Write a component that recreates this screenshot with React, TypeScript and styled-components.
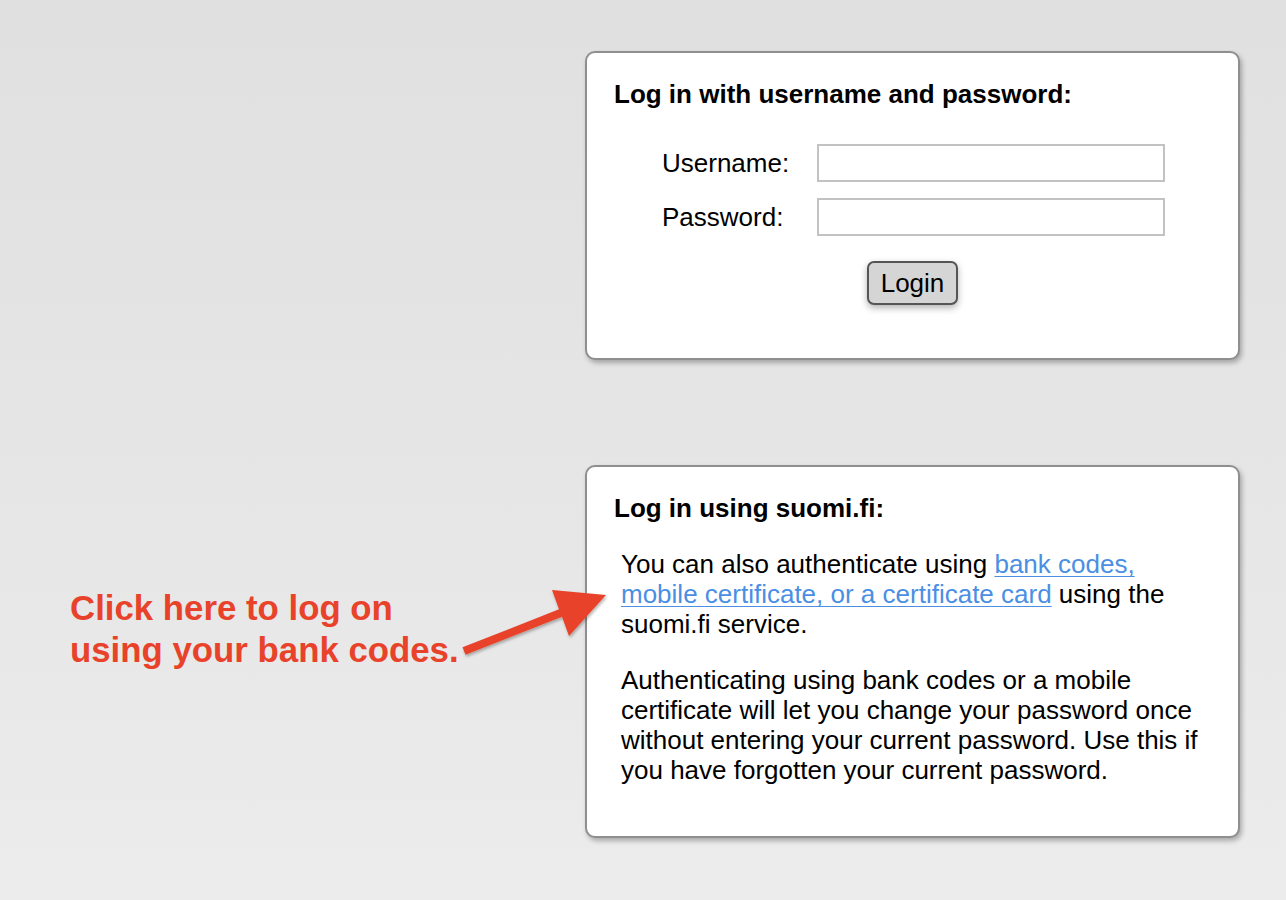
import React from "react";
import styled, { createGlobalStyle } from "styled-components";

const GlobalStyle = createGlobalStyle`
  html, body {
    margin: 0;
    padding: 0;
  }
  body {
    font-family: "Liberation Sans", Arial, Helvetica, sans-serif;
    color: #000;
    background: #e5e5e5;
  }
`;

const Page = styled.div`
  position: relative;
  box-sizing: border-box;
  min-height: 900px;
  width: 1286px;
  padding-top: 51px;
  background: linear-gradient(to bottom, #e0e0e0 0%, #e6e6e6 55%, #ececec 100%);
  display: grid;
  grid-template-columns: 585px 655px;
  grid-auto-rows: auto;
  row-gap: 105px;
  align-content: start;
`;

const Card = styled.section<{ $pb: number }>`
  grid-column: 2;
  box-sizing: border-box;
  background: #fff;
  border: 2px solid #8f8f8f;
  border-radius: 10px;
  box-shadow: 2px 3px 5px rgba(0, 0, 0, 0.28);
  padding: 26px 27px ${(p) => p.$pb}px 27px;
`;

const Title = styled.h2`
  margin: 0;
  font-size: 26px;
  line-height: 30px;
  font-weight: bold;
`;

const FormGrid = styled.div`
  display: grid;
  grid-template-columns: 155px 348px;
  row-gap: 16px;
  align-items: center;
  margin: 35px 0 0 48px;
`;

const Label = styled.label`
  font-size: 26px;
  line-height: 30px;
`;

const Input = styled.input`
  box-sizing: border-box;
  width: 348px;
  height: 38px;
  margin: 0;
  border: 2px solid #c2c2c2;
  border-radius: 0;
  background: #fff;
  font-family: inherit;
  font-size: 20px;
  outline: none;
`;

const ButtonRow = styled.div`
  display: flex;
  justify-content: center;
  margin-top: 25px;
`;

const Button = styled.button`
  box-sizing: border-box;
  width: 91px;
  height: 44px;
  padding: 0;
  background: #d5d5d5;
  border: 2px solid #555;
  border-radius: 7px;
  box-shadow: 0 3px 7px rgba(0, 0, 0, 0.3);
  font-family: "Liberation Sans", Arial, Helvetica, sans-serif;
  font-size: 26px;
  line-height: 30px;
  color: #000;
  cursor: pointer;
`;

const Para = styled.p`
  margin: 26px 7px 0 7px;
  font-size: 26px;
  line-height: 30px;
`;

const Link = styled.a`
  color: #4a8fe3;
  text-decoration: underline;
  text-decoration-thickness: 1px;
  text-underline-offset: 3px;
`;

const Annotation = styled.div`
  grid-column: 1;
  padding: 122px 0 0 70px;
  font-size: 34.8px;
  line-height: 42px;
  font-weight: bold;
  color: #e8432a;
`;

const ArrowLayer = styled.svg`
  position: absolute;
  left: 0;
  top: 0;
  width: 1286px;
  height: 900px;
  pointer-events: none;
  overflow: visible;
`;

export default function App() {
  return (
    <>
      <GlobalStyle />
      <Page>
        <Card $pb={53}>
          <Title>Log in with username and password:</Title>
          <FormGrid>
            <Label htmlFor="username">Username:</Label>
            <Input id="username" type="text" />
            <Label htmlFor="password">Password:</Label>
            <Input id="password" type="password" />
          </FormGrid>
          <ButtonRow>
            <Button type="button">Login</Button>
          </ButtonRow>
        </Card>
        <Annotation>
          Click here to log on
          <br />
          using your bank codes.
        </Annotation>
        <Card $pb={51}>
          <Title>Log in using suomi.fi:</Title>
          <Para>
            You can also authenticate using{" "}
            <Link href="#">bank codes, mobile certificate, or a certificate card</Link>{" "}
            using the suomi.fi service.
          </Para>
          <Para>
            Authenticating using bank codes or a mobile certificate will let you
            change your password once without entering your current password.
            Use this if you have forgotten your current password.
          </Para>
        </Card>
        <ArrowLayer viewBox="0 0 1286 900">
          <defs>
            <filter id="arrowShadow" x="-20%" y="-20%" width="140%" height="140%">
              <feDropShadow dx="1" dy="2" stdDeviation="1.5" floodColor="#000" floodOpacity="0.3" />
            </filter>
          </defs>
          <polygon
            points="462.5,647.3 559,609.3 552,590 606,595 569,636 562,616.7 465.5,654.7"
            fill="#e8432a"
            filter="url(#arrowShadow)"
          />
        </ArrowLayer>
      </Page>
    </>
  );
}
